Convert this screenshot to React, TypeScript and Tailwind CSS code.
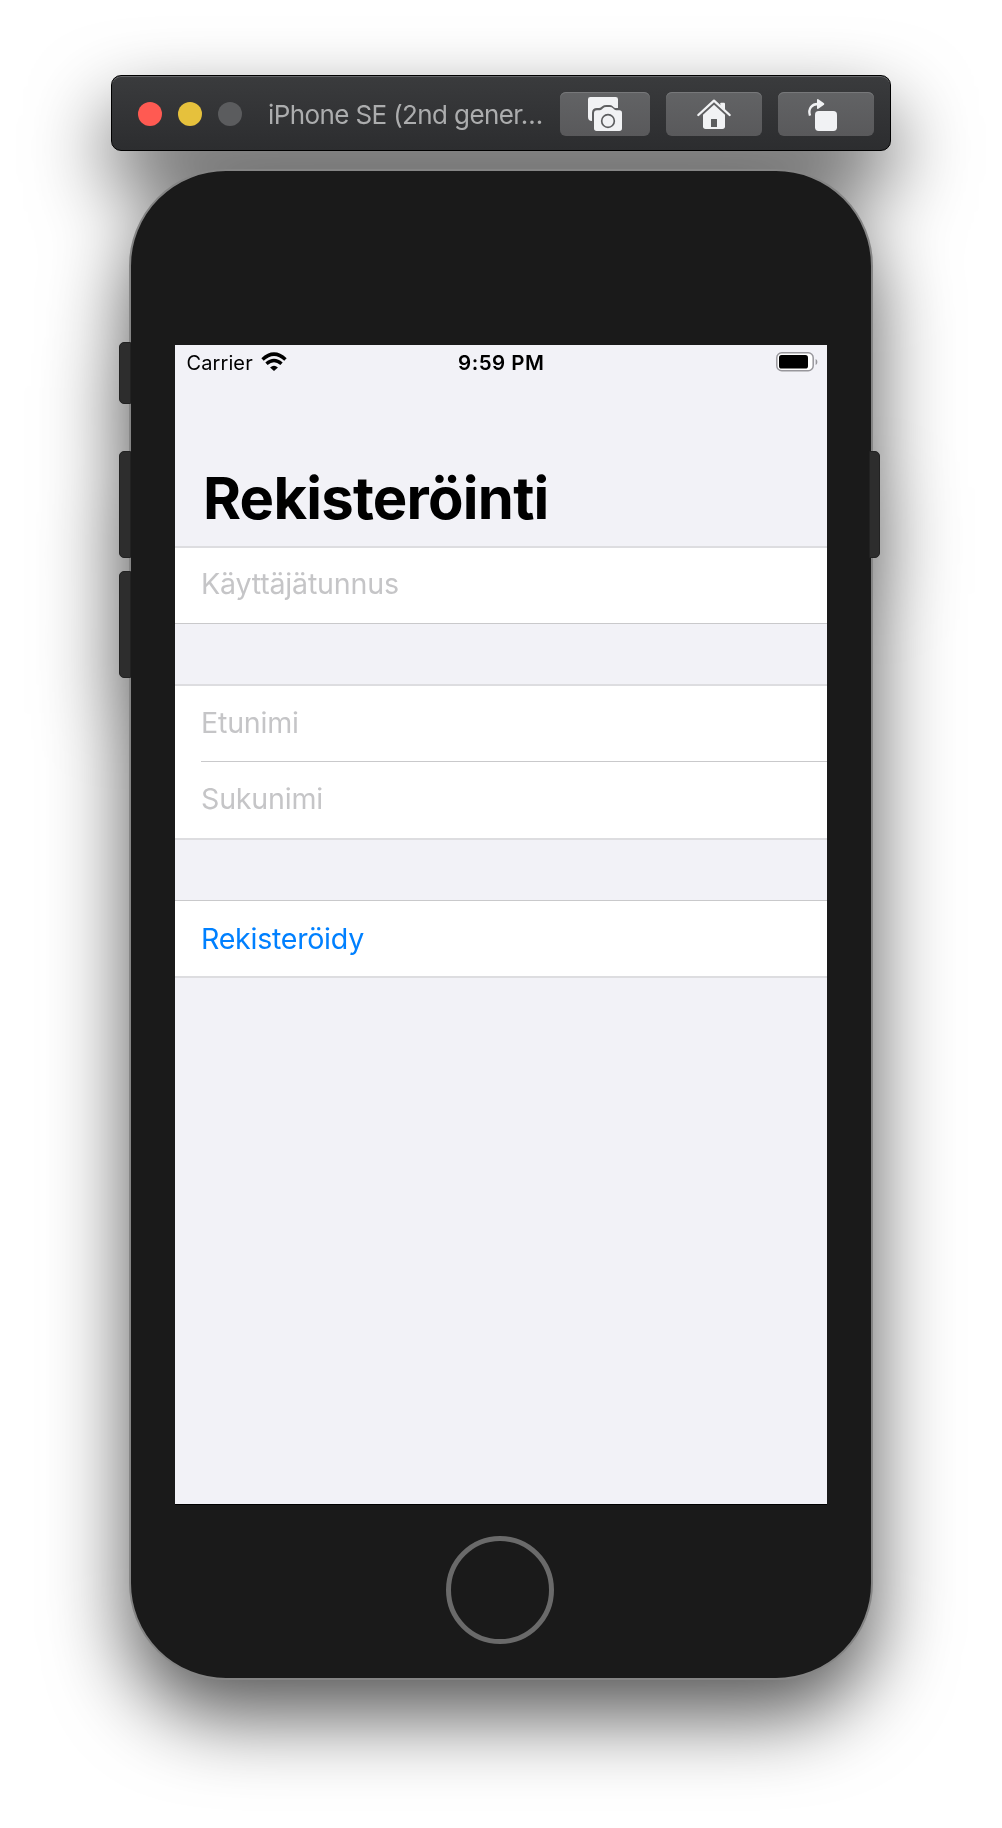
import React from 'react';

function ScreenshotIcon() {
  return (
    <svg viewBox="60 96 270 132" className="h-full w-full">
      <path
        d="M151 111h76q7 0 7 7v26h-8q-3 0-5-2l-3-3q-4-4-10-4h-9q-8 0-12 4l-4 3q-2 2-6 2h-6q-15 0-15 15v24q-12 0-12-12V118q0-7 7-7z"
        fill="#f1f2f4"
      />
      <path
        d="M171 151h8q4 0 7-3l3-3q4-4 9-4h12q5 0 9 4l3 3q3 3 7 3h9q8 0 8 8v46q0 8-8 8h-68q-8 0-8-8v-45q0-9 9-9z"
        fill="#f1f2f4"
      />
      <circle cx="204" cy="183" r="19" fill="none" stroke="#5c5d5f" strokeWidth="5" />
    </svg>
  );
}

function HomeIcon() {
  return (
    <svg viewBox="378 96 288 132" className="h-full w-full">
      <path d="M475 165l47-43 47 43" fill="none" stroke="#f1f2f4" strokeWidth="7" strokeLinecap="round" strokeLinejoin="round" />
      <path d="M541 130q0-2 2-2h9q3 0 3 3v18l-14-12z" fill="#f1f2f4" />
      <path d="M522 134l33 30v35q0 8-8 8h-50q-8 0-8-8v-35z" fill="#f1f2f4" />
      <rect x="513" y="177" width="18" height="24" rx="1" fill="#5c5d5f" />
    </svg>
  );
}

function RotateIcon() {
  return (
    <svg viewBox="714 96 288 132" className="h-full w-full">
      <path d="M810 167q-5-16 3-26 7-9 20-9" fill="none" stroke="#f1f2f4" strokeWidth="7" />
      <path d="M831 120q0-4 4-2l17 12q2 2 0 4l-17 12q-4 2-4-2z" fill="#f1f2f4" />
      <rect x="825" y="153" width="66" height="60" rx="11" fill="#f1f2f4" />
    </svg>
  );
}

function WifiIcon() {
  return (
    <svg viewBox="275 53 78 58" className="mb-px ml-[8.5px] h-[19px] w-[26px]">
      <g fill="none" stroke="#000" strokeWidth="10.5">
        <path d="M279 76q35-33 70 0" />
        <path d="M291 89q23-20 46 0" />
      </g>
      <path d="M302 100q12-10 24 0l-12 11z" fill="#000" />
    </svg>
  );
}

function Battery() {
  return (
    <svg viewBox="0 0 42 20" className="h-5 w-[42px]">
      <rect x=".8" y=".8" width="36.4" height="18" rx="5" fill="#fff" stroke="#98979c" strokeWidth="1.5" />
      <rect x="3" y="3.1" width="29" height="13.4" rx="2.6" fill="#000" />
      <path d="M39.6 7q1.8.6 1.8 3t-1.8 3z" fill="#98979c" />
    </svg>
  );
}

const toolButton =
  'h-11 shrink-0 rounded-[6px] bg-gradient-to-b from-[#626365] to-[#59595b] shadow-[inset_0_1px_0_#77787a]';

function TitleBar() {
  return (
    <header className="flex h-[76px] w-[780px] items-center rounded-[10px] border border-black bg-gradient-to-b from-[#3a3b3d] to-[#2c2d2f] pt-0.5 pr-4 pl-[26px] shadow-[inset_0_1px_0_#66676a]">
      <div className="flex gap-4">
        <span className="size-6 rounded-full bg-[#ff5a52]" />
        <span className="size-6 rounded-full bg-[#e6c13c]" />
        <span className="size-6 rounded-full bg-[#5b5c5e]" />
      </div>
      <h1 className="ml-[26px] w-[292px] text-[26px] tracking-[-0.61px] whitespace-nowrap text-[#acadae]">
        iPhone SE (2nd gener…
      </h1>
      <div className="flex gap-4">
        <button className={toolButton + ' w-[90px]'}>
          <ScreenshotIcon />
        </button>
        <button className={toolButton + ' w-24'}>
          <HomeIcon />
        </button>
        <button className={toolButton + ' w-24'}>
          <RotateIcon />
        </button>
      </div>
    </header>
  );
}

function StatusBar() {
  return (
    <div className="grid h-[34px] grid-cols-3 items-center pr-[9px] pl-[11.5px] text-black">
      <div className="flex items-center">
        <span className="pt-0.5 text-[20px] tracking-[0.1px]">Carrier</span>
        <WifiIcon />
      </div>
      <span className="pt-0.5 pr-0.5 text-center text-[20.5px] font-semibold tracking-[0.5px]">9:59 PM</span>
      <div className="flex justify-end">
        <Battery />
      </div>
    </div>
  );
}

const fieldClass =
  'block w-full bg-transparent pl-[26px] text-[28.6px] tracking-[-0.2px] outline-none placeholder:text-[#c5c5c7] placeholder:opacity-100';

function Screen() {
  return (
    <main className="h-[1159px] w-[652px] bg-[#f2f2f7] shadow-[0_1px_0_#000]">
      <StatusBar />
      <h2 className="h-[167px] pt-[84px] pl-[28px] text-[58px] leading-[70px] font-bold tracking-[-0.77px] text-black">
        Rekisteröinti
      </h2>

      <section className="h-[78px] border-t-2 border-b border-t-[#dddde0] border-b-[#c9c9cb] bg-white">
        <input className={fieldClass + ' h-[71px]'} placeholder="Käyttäjätunnus" />
      </section>

      <section className="mt-[60px] h-[156px] border-y-2 border-[#dddde0] bg-white">
        <input className={fieldClass + ' h-[72px]'} placeholder="Etunimi" />
        <div className="mt-[3px] ml-[26px] h-px bg-[#c9c9cb]" />
        <input className={fieldClass + ' h-[73px]'} placeholder="Sukunimi" />
      </section>

      <section className="mt-[60px] h-[78px] border-t border-b-2 border-t-[#c9c9cb] border-b-[#dddde0] bg-white">
        <button className="block h-[75px] w-full pt-[2px] pl-[26px] text-left text-[28.6px] tracking-[-0.27px] text-[#0080ff]">
          Rekisteröidy
        </button>
      </section>
    </main>
  );
}

const sideKey = 'absolute border border-[#222] bg-[#2d2d2d]';

function Phone() {
  return (
    <div className="relative flex h-[1511px] w-[744px] flex-col items-center rounded-[97px] border-2 border-[#858585] bg-[#1a1a1a] pt-[174px]">
      <span className={sideKey + ' top-[171px] -left-3 h-[62px] w-3 rounded-l-[5px]'} />
      <span className={sideKey + ' top-[280px] -left-3 h-[107px] w-3 rounded-l-[5px]'} />
      <span className={sideKey + ' top-[400px] -left-3 h-[107px] w-3 rounded-l-[5px]'} />
      <span className={sideKey + ' top-[280px] -right-[9px] h-[107px] w-[11px] rounded-r-[5px]'} />
      <Screen />
      <button className="mt-8 mr-0.5 size-[108px] rounded-full border-[5px] border-[#6a6a6a]" aria-label="Home" />
    </div>
  );
}

export default function App() {
  return (
    <div className="flex h-[1828px] flex-col items-center overflow-hidden bg-white pt-[75px] font-['Inter',sans-serif]">
      <div className="flex flex-col items-center gap-[18px] drop-shadow-[0_36px_40px_rgba(0,0,0,0.66)]">
        <TitleBar />
        <Phone />
      </div>
    </div>
  );
}
